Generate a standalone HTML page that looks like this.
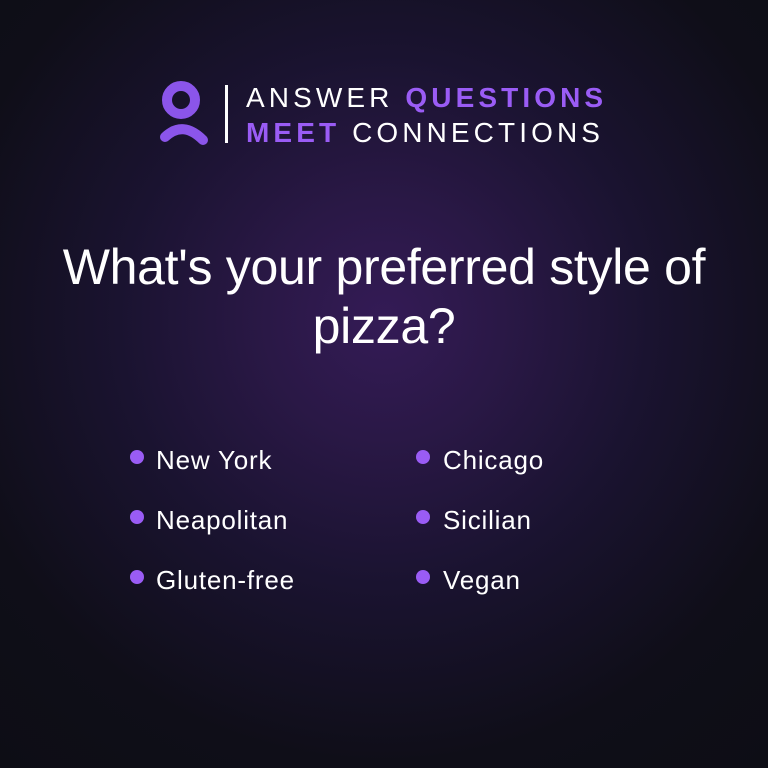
<!DOCTYPE html>
<html><head><style>
body{margin:0;width:768px;height:768px;overflow:hidden;font-family:"Liberation Sans",sans-serif;
background:radial-gradient(circle at 384px 320px,#341b56 0%,#2a1846 20%,#1a1330 45%,#0f0e18 75%,#0d0d15 100%);color:#fff;position:relative}
.t{position:absolute;font-size:28px;letter-spacing:4.1px;line-height:1;white-space:nowrap}
.p{color:#9a5cf5;font-weight:bold}
h1{position:absolute;top:238px;left:0;width:768px;margin:0;text-align:center;font-weight:normal;font-size:50px;line-height:59px;letter-spacing:-0.3px}
.i{position:absolute;font-size:26px;letter-spacing:0.8px;line-height:1;white-space:nowrap}
.d{position:absolute;width:14px;height:14px;border-radius:50%;background:#9a5cf5}
</style></head><body>
<svg style="position:absolute;left:150px;top:74px" width="70" height="80">
<circle cx="31" cy="26" r="14" fill="none" stroke="#8b55ea" stroke-width="10"/>
<path d="M15 63 Q33 46 53 66" fill="none" stroke="#8b55ea" stroke-width="10" stroke-linecap="round"/>
</svg>
<div style="position:absolute;left:225px;top:85px;width:3px;height:58px;background:#fff"></div>
<div class="t" style="left:246px;top:84px">ANSWER <span class="p">QUESTIONS</span></div>
<div class="t" style="left:246px;top:119px"><span class="p">MEET</span> CONNECTIONS</div>
<h1>What's your preferred style of<br>pizza?</h1>
<div class="d" style="left:130px;top:450px"></div><div class="i" style="left:156px;top:447px">New York</div>
<div class="d" style="left:130px;top:510px"></div><div class="i" style="left:156px;top:507px">Neapolitan</div>
<div class="d" style="left:130px;top:570px"></div><div class="i" style="left:156px;top:567px">Gluten-free</div>
<div class="d" style="left:416px;top:450px"></div><div class="i" style="left:443px;top:447px">Chicago</div>
<div class="d" style="left:416px;top:510px"></div><div class="i" style="left:443px;top:507px">Sicilian</div>
<div class="d" style="left:416px;top:570px"></div><div class="i" style="left:443px;top:567px">Vegan</div>
</body></html>
